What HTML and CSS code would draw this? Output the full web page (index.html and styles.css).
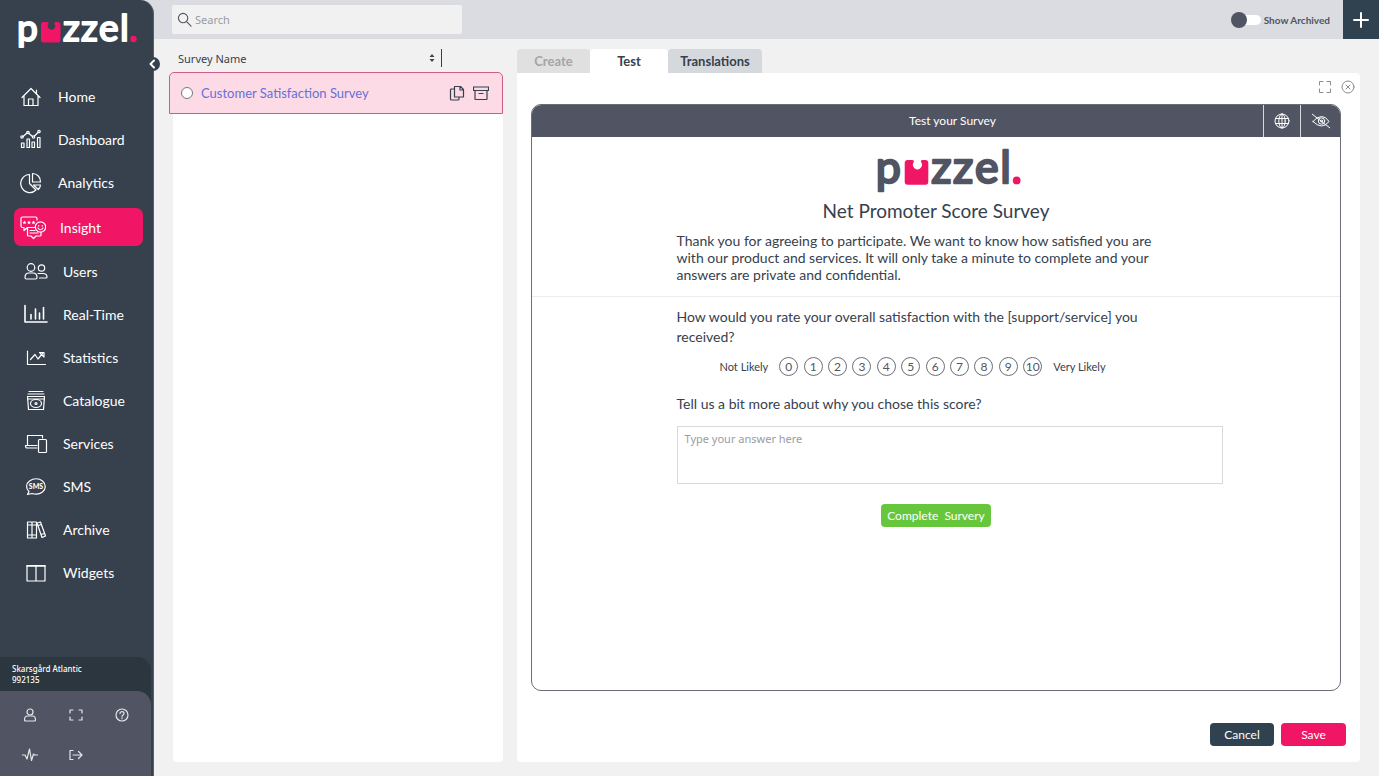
FILE: index.html
```html
<!DOCTYPE html>
<html lang="en">
<head>
    <meta charset="UTF-8">
    <meta name="viewport" content="width=device-width, initial-scale=1.0">
    <title>Puzzel - Survey</title>
    <link rel="stylesheet" href="styles.css">
</head>
<body>
    <div class="app">
        <aside class="sidebar">
            <svg class="logo" viewBox="0 0 120 38" role="img" aria-label="puzzel.">
                <text class="logo-text" x="-1 45 63 81 102" y="28">pzzel</text>
                <path class="logo-pink" d="M25.500 9H29q2.200 0 1.400 2a3.700 3.700 0 1 0 6.200 0q-.8-2 1.400-2h2q2.500 0 2.500 2.500v15.500q0 2.500-2.500 2.500H25.500q-2.500 0-2.500-2.500V11.500q0-2.500 2.500-2.500z"/>
                <circle class="logo-pink" cx="115.500" cy="26" r="3.200"/>
            </svg>
            <button class="collapse" aria-label="Collapse menu">
                <svg viewBox="0 0 14 14"><path d="M8 3.500 4.500 7 8 10.500"/></svg>
            </button>

            <nav class="menu">
                <div class="menu-group">
                    <a class="menu-item" href="#">
                        <svg viewBox="0 0 26 26"><path d="M4 13.500 13 4.500l9 9M6 12v9.500h14V12M10.500 21.500v-6.500h4.500v6.500M18.500 9V6"/></svg>
                        Home
                    </a>
                    <a class="menu-item" href="#">
                        <svg viewBox="0 0 26 26"><path d="M3.500 16h2.500v4.500H3.500zM9 12h2.500v8.500H9zM14 15h2.500v5.500H14zM19.500 10.500H22v10h-2.500zM5 9.500l4-3.500M11 6.500l3.500 3M16.500 9l3.500-3.500"/><circle cx="4" cy="10" r="1.200"/><circle cx="10" cy="5.500" r="1.200"/><circle cx="15.500" cy="10" r="1.200"/><circle cx="21" cy="4.500" r="1.200"/></svg>
                        Dashboard
                    </a>
                    <a class="menu-item" href="#">
                        <svg viewBox="0 0 26 26"><path d="M11.500 4.500A9 9 0 1 0 18 20l-6.500-6.500zM14.500 3.500v8.500H22.500A8 8 0 0 0 14.500 3.500zM15.500 15h7a7 7 0 0 1-2.200 4.500z"/></svg>
                        Analytics
                    </a>
                </div>
                <a class="menu-item menu-item-active" href="#">
                    <svg viewBox="0 0 26 26"><path d="M15 13.500H7.500L4 16.500v-3H2.500a1.500 1.500 0 0 1-1.500-1.500V4.500A1.500 1.500 0 0 1 2.500 3h13A1.500 1.500 0 0 1 17 4.500V6M7.500 13.500V21a1 1 0 0 0 1 1H11l2.500 2.500L16 22h4a1 1 0 0 0 1-1v-2.500M10 16.500h5M10 19h8"/><circle cx="20.500" cy="13" r="5.200"/><path d="M18 14q2.500 3.500 5 0M18.700 11.500v.6M22.300 11.500v.6"/><path class="solid" d="m4.500 6.500.6 1.300 1.400.1-1.100.9.400 1.400-1.300-.8-1.300.8.400-1.400-1.100-.9 1.400-.1zM9 6.500l.6 1.300 1.400.1-1.100.9.400 1.400-1.300-.8-1.300.8.400-1.400-1.100-.9 1.400-.1zM13.500 6.500l.6 1.300 1.400.1-1.100.9.400 1.400-1.300-.8-1.300.8.400-1.400-1.100-.9 1.400-.1z"/></svg>
                    Insight
                </a>
                <div class="menu-group menu-group-wide">
                    <a class="menu-item" href="#">
                        <svg viewBox="0 0 26 26"><circle cx="8" cy="8.500" r="3.800"/><circle cx="18.500" cy="9" r="3.200"/><path d="M2 18.500c0-3 2-4.500 4-4.500h4c2.500 0 4 1.500 4 4.500 0 1-.5 1.500-1.500 1.500h-9C2.500 20 2 19.500 2 18.500zM15 14.500h5c2.500 0 4 1.500 4 3.500q0 1-1 1h-6.500"/></svg>
                        Users
                    </a>
                    <a class="menu-item" href="#">
                        <svg viewBox="0 0 26 26"><path class="thick" d="M2 3.500v16.500h22M8 12.500v4.500M12.500 7v10M16.500 11v6M20.500 5.500V17"/></svg>
                        Real-Time
                    </a>
                    <a class="menu-item" href="#">
                        <svg viewBox="0 0 26 26"><path d="M4.500 6v13.500H22.500M7.500 14.500 12 9.500l3 4.500 4.500-5.500M16.500 7.500h4.500V12z"/></svg>
                        Statistics
                    </a>
                    <a class="menu-item" href="#">
                        <svg viewBox="0 0 26 26"><path d="M6 3.500h14M5 6h16M4.500 8.500h17l-1 13h-15zM4.500 11h17"/><ellipse cx="13" cy="15.500" rx="5.500" ry="4"/><circle cx="13" cy="15.500" r="1"/></svg>
                        Catalogue
                    </a>
                    <a class="menu-item" href="#">
                        <svg viewBox="0 0 26 26"><path d="M4.500 14.500V4.500h15V7M14 14.500H2.500q0 2.500 1.500 2.500H14"/><rect x="15.500" y="8.500" width="8" height="13" rx="1"/></svg>
                        Services
                    </a>
                    <a class="menu-item" href="#">
                        <svg viewBox="0 0 26 26"><path d="M4.500 20.500 6 17.500C2.500 14.500 3 9.500 6.500 7c4-3 9.500-3 13 0 3.800 3.300 3.500 8.200 0 11-3 2.300-7 2.500-10.500 1.500z"/><text class="sms-text" x="13" y="15">SMS</text></svg>
                        SMS
                    </a>
                    <a class="menu-item" href="#">
                        <svg viewBox="0 0 26 26"><path d="M4.500 5h4.500v16H4.500zM9 5h4.500v16H9zM4.500 8h9M4.500 18h9M14 6l3.500-1 5 14-3.500 1.500zM15 8.500l3.500-1M18 17.500l3.500-1"/></svg>
                        Archive
                    </a>
                    <a class="menu-item" href="#">
                        <svg viewBox="0 0 26 26"><path d="M4 5.500h18v15.500H4zM13 5.500v15.500"/><path class="thick" d="M4 6h18"/></svg>
                        Widgets
                    </a>
                </div>
            </nav>

            <div class="account">
                <p class="account-name">Skarsgård Atlantic<br>992135</p>
                <div class="account-tools">
                    <button aria-label="Profile"><svg viewBox="0 0 16 16"><circle cx="8" cy="5" r="3"/><path d="M2.500 13c0-2.500 1.500-4 3-4h5c1.500 0 3 1.500 3 4q0 1-1 1h-9q-1 0-1-1z"/></svg></button>
                    <button aria-label="Full screen"><svg viewBox="0 0 16 16"><path d="M5 3H2v3M11 3h3v3M2 10v3h3M14 10v3h-3"/></svg></button>
                    <button aria-label="Help"><svg viewBox="0 0 16 16"><circle cx="8" cy="8" r="6"/><path d="M6 6.500c0-2.500 4-2.500 4 0C10 8 8 7.800 8 9.500M8 10.800v.9"/></svg></button>
                    <button aria-label="Activity"><svg viewBox="0 0 16 16"><path d="M0 8h3l2 4 2.500-10 2 11.500L11.500 7l1 1H16"/></svg></button>
                    <button aria-label="Log out"><svg viewBox="0 0 16 16"><path d="M5 3.500H2v9h3M5 8h9M10.500 4.500 14 8l-3.500 3.500"/></svg></button>
                </div>
            </div>
        </aside>

        <div class="page">
            <header class="topbar">
                <label class="search">
                    <svg viewBox="0 0 16 16"><circle cx="6.500" cy="6.500" r="5"/><path d="m10.500 10.500 4.500 4.500"/></svg>
                    <input type="text" placeholder="Search" aria-label="Search">
                </label>
                <label class="toggle">
                    <input type="checkbox">
                    Show Archived
                </label>
                <button class="add" aria-label="Add survey">
                    <svg viewBox="0 0 16 16"><path d="M8 1v14M1 8h14"/></svg>
                </button>
            </header>

            <div class="columns">
                <section class="surveys">
                    <div class="surveys-head">
                        <span>Survey Name</span>
                        <button class="sort" aria-label="Sort"><svg viewBox="0 0 6 10"><path d="M3 1l2.500 3h-5zM3 9l2.500-3h-5z"/></svg></button>
                    </div>
                    <div class="survey-row">
                        <input type="radio" name="survey" id="survey1">
                        <label for="survey1">Customer Satisfaction Survey</label>
                        <button aria-label="Copy"><svg viewBox="0 0 16 16"><path d="M5.500 1.500h6l3 3v7.500h-9zM11 1.500v3.500h3.500M5.500 4H2.500q-1 0-1 1v9q0 1 1 1h6.500q1 0 1-1v-2"/></svg></button>
                        <button aria-label="Archive"><svg viewBox="0 0 16 16"><path d="M.5 2h15v3.500H.5zM2 5.500V14q0 .5.500.5h11q.5 0 .5-.5V5.500M6 8.500h4"/></svg></button>
                    </div>
                    <div class="surveys-body"></div>
                </section>

                <main class="editor">
                    <div class="tabs">
                        <button class="tab tab-create">Create</button>
                        <button class="tab tab-test">Test</button>
                        <button class="tab tab-translations">Translations</button>
                    </div>
                    <div class="panel">
                        <div class="panel-tools">
                            <button aria-label="Expand"><svg viewBox="0 0 14 14"><path d="M5 1.500H1.500V5M9 1.500h3.500V5M1.500 9v3.500H5M12.500 9v3.500H9"/></svg></button>
                            <button aria-label="Close"><svg viewBox="0 0 14 14"><circle cx="7" cy="7" r="6"/><path d="m5 5 4 4M9 5 5 9"/></svg></button>
                        </div>

                        <div class="preview">
                            <div class="preview-head">
                                <h2>Test your Survey</h2>
                                <button aria-label="Language"><svg viewBox="0 0 18 16"><circle cx="9" cy="8" r="7"/><ellipse cx="9" cy="8" rx="3.200" ry="7"/><path d="M2.500 5.500h13M2.500 10.500h13M9 1v14"/></svg></button>
                                <button class="cell-eye" aria-label="Hide"><svg viewBox="0 0 18 16"><path d="M1 8.500Q5 3.500 9.500 3.500T17 8.500Q13.500 13 9.500 13T1 8.500zM0 1l18 14"/><circle cx="9.500" cy="8" r="3.200"/><circle cx="9.500" cy="8" r="1"/></svg></button>
                            </div>

                            <div class="intro">
                                <div class="content">
                                    <svg class="logo logo-dark" viewBox="0 0 120 38" role="img" aria-label="puzzel.">
                                        <text class="logo-text" x="-1 45 63 81 102" y="28">pzzel</text>
                                        <path class="logo-pink" d="M25.500 9H29q2.200 0 1.400 2a3.700 3.700 0 1 0 6.200 0q-.8-2 1.400-2h2q2.500 0 2.500 2.500v15.500q0 2.500-2.500 2.500H25.500q-2.500 0-2.500-2.500V11.500q0-2.500 2.500-2.500z"/>
                                        <circle class="logo-pink" cx="115.500" cy="26" r="3.200"/>
                                    </svg>
                                </div>
                                <h1>Net Promoter Score Survey</h1>
                                <div class="content">
                                    <p>Thank you for agreeing to participate. We want to know how satisfied you are with our product and services. It will only take a minute to complete and your answers are private and confidential.</p>
                                </div>
                            </div>

                            <form class="questions">
                                <div class="content">
                                    <p class="question" id="q1">How would you rate your overall satisfaction with the [support/service] you received?</p>
                                    <div class="scale" role="radiogroup" aria-labelledby="q1">
                                        <span>Not Likely</span>
                                        <div class="scores">
                                            <label class="score"><input type="radio" name="score">0</label>
                                            <label class="score"><input type="radio" name="score">1</label>
                                            <label class="score"><input type="radio" name="score">2</label>
                                            <label class="score"><input type="radio" name="score">3</label>
                                            <label class="score"><input type="radio" name="score">4</label>
                                            <label class="score"><input type="radio" name="score">5</label>
                                            <label class="score"><input type="radio" name="score">6</label>
                                            <label class="score"><input type="radio" name="score">7</label>
                                            <label class="score"><input type="radio" name="score">8</label>
                                            <label class="score"><input type="radio" name="score">9</label>
                                            <label class="score"><input type="radio" name="score">10</label>
                                        </div>
                                        <span>Very Likely</span>
                                    </div>
                                    <label class="question" for="answer">Tell us a bit more about why you chose this score?</label>
                                    <textarea id="answer" placeholder="Type your answer here"></textarea>
                                </div>
                                <button type="button" class="btn btn-complete">Complete&nbsp; Survery</button>
                            </form>
                        </div>

                        <div class="actions">
                            <button class="btn btn-cancel">Cancel</button>
                            <button class="btn btn-save">Save</button>
                        </div>
                    </div>
                </main>
            </div>
        </div>
    </div>
</body>
</html>
```
FILE: styles.css
```css
* {
    box-sizing: border-box;
}
body {
    margin: 0;
    padding: 0 5px 3px 0;
    background: #fff;
    color: #36414d;
    font-family: Lato, sans-serif;
    font-size: 14px;
}
h1, h2, p {
    margin: 0;
}
button {
    padding: 0;
    border: none;
    background: none;
    color: inherit;
    font-family: inherit;
    cursor: pointer;
}
svg {
    display: block;
    flex: none;
    fill: none;
    stroke: currentColor;
    stroke-width: 1.2;
    stroke-linecap: round;
    stroke-linejoin: round;
}
.app {
    display: flex;
    min-height: calc(100vh - 3px);
    background: #dbdce1;
}

/* sidebar */
.sidebar {
    position: relative;
    display: flex;
    flex-direction: column;
    flex: none;
    width: 154px;
    padding-top: 13px;
    background: #36414d;
    border-right: 1px solid #565d6b;
    border-radius: 0 14px 0 0;
    color: #fff;
}
.logo {
    width: 120px;
    height: 38px;
    margin-left: 18px;
    overflow: visible;
}
.logo-text {
    fill: currentColor;
    stroke-width: 2;
    font-family: Lato, sans-serif;
    font-size: 37px;
    font-weight: 400;
}
.logo-pink {
    fill: #f01665;
    stroke: none;
}
.collapse {
    position: absolute;
    top: 57px;
    right: -7px;
    width: 14px;
    height: 14px;
    border-radius: 50%;
    background: #36414d;
}
.collapse svg {
    width: 14px;
    height: 14px;
    stroke-width: 2;
}
.menu {
    flex: 1;
    padding-top: 24px;
}
.menu-group {
    padding-left: 18px;
}
.menu-group-wide {
    padding-left: 23px;
}
.menu-item {
    display: flex;
    align-items: center;
    gap: 14px;
    height: 43px;
    color: #fff;
    text-decoration: none;
}
.menu-item svg {
    width: 26px;
    height: 26px;
}
.menu-item-active {
    height: 38px;
    margin: 4px 10px 4px 14px;
    padding-left: 6px;
    border-radius: 7px;
    background: #f01665;
}
.thick {
    stroke-width: 1.6;
}
.solid {
    fill: currentColor;
    stroke: none;
}
.sms-text {
    fill: currentColor;
    stroke: none;
    font-size: 7px;
    font-weight: 900;
    text-anchor: middle;
}
.account {
    margin-right: 2px;
    border-radius: 0 14px 0 0;
    background: #2c363e;
}
.account-name {
    padding: 6px 12px;
    font-family: "Noto Sans", sans-serif;
    font-size: 8px;
    font-weight: 500;
    line-height: 11px;
}
.account-tools {
    display: grid;
    grid-template-columns: repeat(3, 46px);
    grid-auto-rows: 40px;
    height: 85px;
    padding: 4px 7px 0;
    border-radius: 0 14px 0 0;
    background: #515563;
    color: #e4e5ea;
}
.account-tools button {
    display: grid;
    place-items: center;
}
.account-tools svg {
    width: 16px;
    height: 16px;
}

/* top bar */
.page {
    display: flex;
    flex-direction: column;
    flex: 1;
    min-width: 0;
}
.topbar {
    display: flex;
    align-items: center;
    height: 39px;
    padding-left: 18px;
}
.search {
    display: flex;
    align-items: center;
    gap: 3px;
    width: 290px;
    height: 29px;
    padding: 0 5px;
    border-radius: 2px;
    background: #f1f1f1;
    color: #515563;
}
.search svg {
    width: 15px;
    height: 15px;
}
.search input {
    flex: 1;
    min-width: 0;
    padding: 0;
    border: none;
    outline: none;
    background: none;
    font-family: "Noto Sans", sans-serif;
    font-size: 11px;
}
.search input::placeholder, textarea::placeholder {
    color: #9a9ca3;
}
.toggle {
    display: flex;
    align-items: center;
    gap: 3px;
    margin-left: auto;
    margin-right: 13px;
    color: #515563;
    font-size: 10px;
    font-weight: 700;
}
.toggle input {
    display: flex;
    align-items: center;
    appearance: none;
    width: 23px;
    height: 10px;
    margin: 0;
    border-radius: 5px;
    background: #fff;
}
.toggle input::before {
    content: "";
    flex: none;
    width: 16px;
    height: 16px;
    margin-left: -7px;
    border-radius: 50%;
    background: #515563;
}
.toggle input:checked::before {
    margin-left: 14px;
}
.add {
    display: grid;
    place-items: center;
    align-self: flex-start;
    width: 36px;
    height: 40px;
    background: #304250;
    color: #fff;
}
.add svg {
    width: 16px;
    height: 16px;
    stroke-width: 2;
}
.columns {
    display: flex;
    flex: 1;
    gap: 14px;
    padding: 10px 19px 14px 15px;
    background: #f1f1f1;
}

/* survey list */
.surveys {
    display: flex;
    flex-direction: column;
    flex: none;
    width: 334px;
}
.surveys-head {
    display: flex;
    align-items: center;
    justify-content: space-between;
    width: 273px;
    height: 18px;
    margin-bottom: 5px;
    padding: 0 6px 0 9px;
    border-right: 1px solid #36414d;
    font-family: "Noto Sans", sans-serif;
    font-size: 11px;
}
.sort svg {
    width: 6px;
    height: 10px;
    fill: currentColor;
    stroke: none;
}
.survey-row {
    display: flex;
    align-items: center;
    gap: 8px;
    height: 42px;
    padding: 0 13px 0 11px;
    border: 1px solid #cf5c88;
    border-radius: 5px 5px 0 0;
    background: #fcdbe6;
}
.survey-row input {
    appearance: none;
    flex: none;
    width: 12px;
    height: 12px;
    margin: 0;
    border: 1px solid #777;
    border-radius: 50%;
    background: #fff;
}
.survey-row label {
    flex: 1;
    color: #6670d8;
    font-size: 13px;
}
.survey-row svg {
    width: 16px;
    height: 16px;
}
.surveys-body {
    flex: 1;
    margin-left: 4px;
    border-radius: 0 0 4px 4px;
    background: #fff;
}

/* editor */
.editor {
    display: flex;
    flex-direction: column;
    flex: 1;
    min-width: 0;
}
.tabs {
    display: flex;
    height: 24px;
}
.tab {
    border-radius: 4px 4px 0 0;
    font-size: 13px;
    font-weight: 700;
}
.tab-create {
    width: 73px;
    background: #e0e0e0;
    color: #a3a5a9;
}
.tab-test {
    width: 78px;
    background: #fff;
}
.tab-translations {
    width: 94px;
    background: #d5d9de;
}
.panel {
    display: flex;
    flex-direction: column;
    flex: 1;
    padding: 7px 5px 16px 14px;
    border-radius: 0 4px 4px 4px;
    background: #fff;
}
.panel-tools {
    display: flex;
    justify-content: flex-end;
    gap: 9px;
    margin-bottom: 10px;
    color: #8b8b8b;
}
.panel-tools svg {
    width: 14px;
    height: 14px;
    stroke-width: 1;
}
.preview {
    flex: 1;
    margin-right: 14px;
    border: 1px solid #6b6e75;
    border-radius: 10px;
    overflow: hidden;
}
.preview-head {
    display: flex;
    height: 32px;
    background: #515563;
    color: #fff;
}
.preview-head h2 {
    flex: 1;
    padding-left: 110px;
    font-size: 12px;
    font-weight: 400;
    line-height: 32px;
    text-align: center;
}
.preview-head button {
    display: grid;
    place-items: center;
    width: 37px;
    border-left: 1px solid #d5d9de;
}
.preview-head .cell-eye {
    width: 40px;
}
.preview-head svg {
    width: 18px;
    height: 16px;
    stroke-width: 1;
}
.intro {
    height: 160px;
    padding-top: 12px;
    border-bottom: 1px solid #ededed;
}
.content {
    width: 573px;
    max-width: 100%;
    margin: 0 auto;
    padding-left: 27px;
}
.logo-dark {
    width: 147px;
    height: 46px;
    margin: 0 auto;
    color: #515563;
}
.intro h1 {
    margin-bottom: 6px;
    font-size: 19px;
    font-weight: 400;
    line-height: 31px;
    text-align: center;
}
.intro p {
    max-width: 490px;
    line-height: 17px;
}
.questions {
    padding-top: 10px;
    text-align: center;
}
.questions .content {
    text-align: left;
}
.question {
    display: block;
    max-width: 490px;
    line-height: 20px;
}
.scale {
    display: flex;
    align-items: center;
    gap: 11px;
    margin: 10px 0 18px;
    padding-left: 43px;
    font-size: 11px;
}
.scores {
    display: flex;
    justify-content: space-between;
    width: 263px;
}
.score {
    display: grid;
    place-items: center;
    width: 19px;
    height: 19px;
    border: 1px solid #6b6e75;
    border-radius: 50%;
    color: #515563;
    font-size: 12px;
}
.score input {
    position: absolute;
    opacity: 0;
}
.score:has(input:checked) {
    background: #f01665;
    color: #fff;
}
textarea {
    display: block;
    width: 100%;
    height: 58px;
    margin: 12px 0 20px;
    padding: 4px 7px;
    border: 1px solid #d9d9d9;
    font-family: "Noto Sans", sans-serif;
    font-size: 11px;
    resize: none;
}
.btn {
    height: 23px;
    border-radius: 4px;
    color: #fff;
    font-size: 12px;
}
.btn-complete {
    width: 110px;
    background: #66c73d;
}
.actions {
    display: flex;
    justify-content: flex-end;
    gap: 7px;
    margin-top: 32px;
    padding-right: 9px;
}
.btn-cancel {
    width: 64px;
    background: #304250;
}
.btn-save {
    width: 65px;
    background: #f01665;
}
```
